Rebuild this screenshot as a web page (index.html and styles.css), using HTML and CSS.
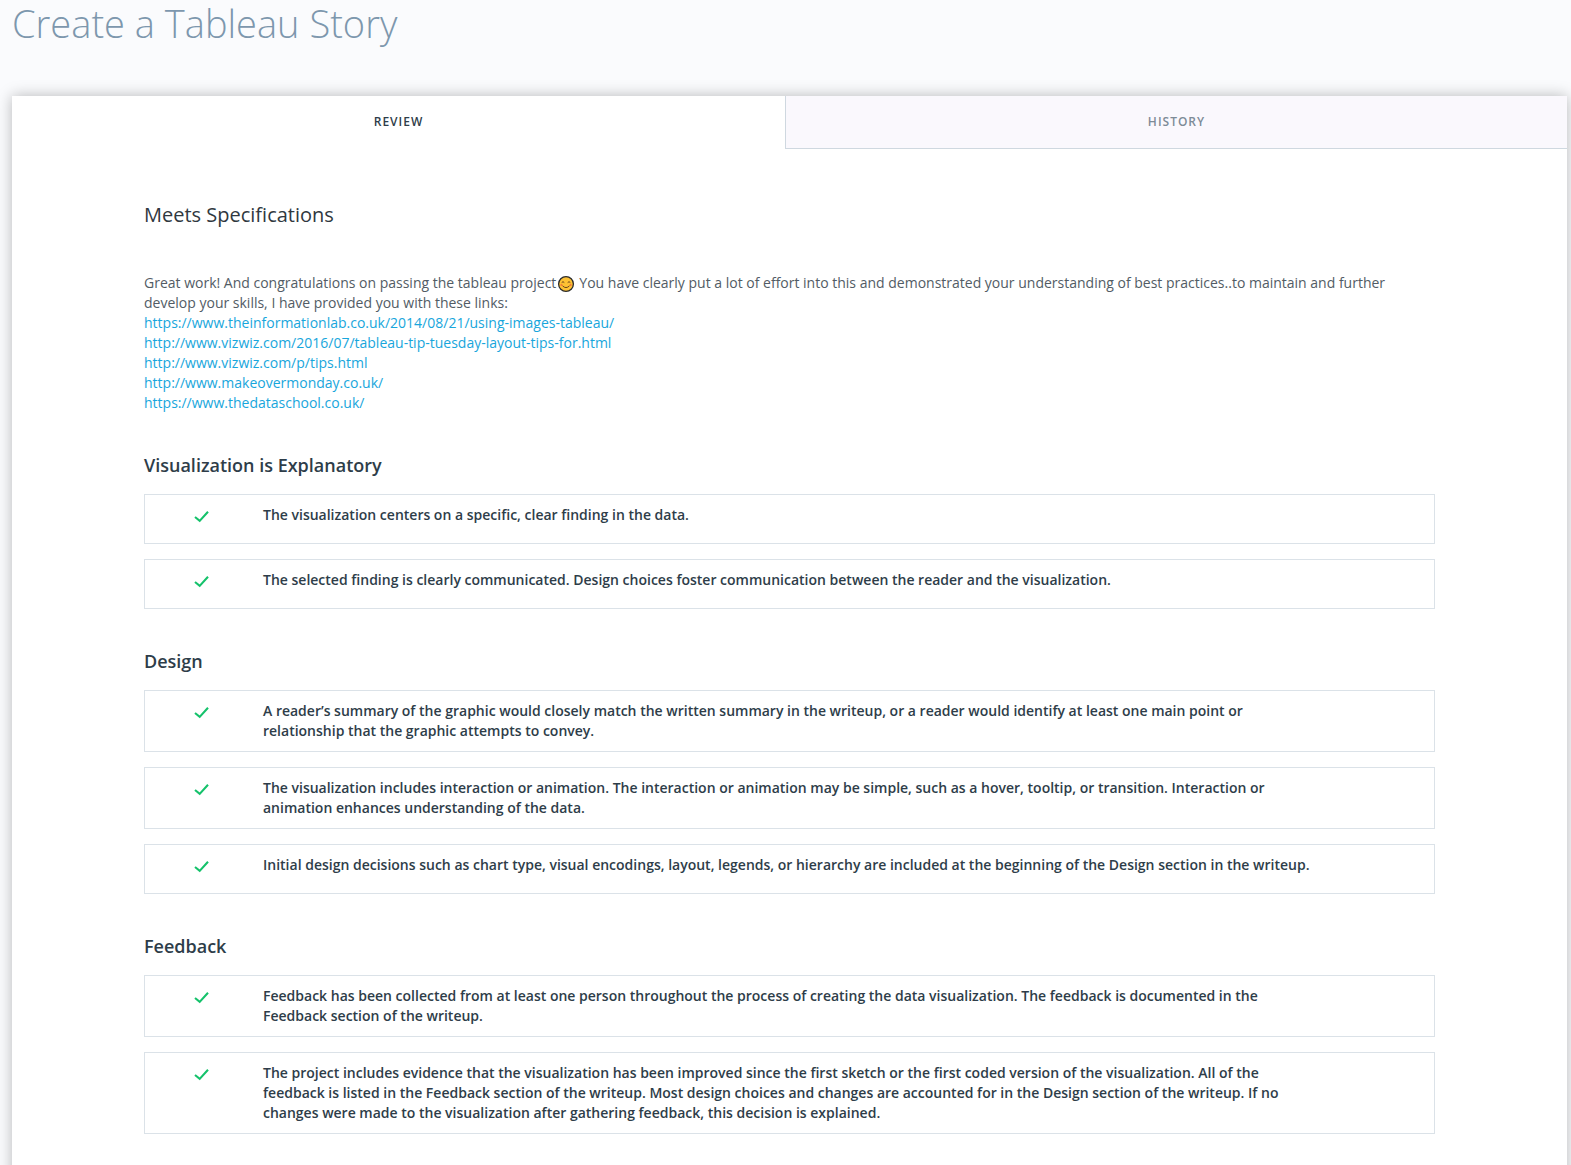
FILE: index.html
```html
<!DOCTYPE html>
<html lang="en">
<head>
<meta charset="utf-8">
<title>Create a Tableau Story</title>
<link rel="stylesheet" href="styles.css">
</head>
<body>
<svg class="sprite" width="0" height="0" aria-hidden="true">
  <symbol id="check" viewBox="0 0 15 12"><path d="M1 6 5.7 9.9 14 0.8" fill="none" stroke="#15c26b" stroke-width="2.1"/></symbol>
</svg>
<h1 class="page-title">Create a Tableau Story</h1>
<main class="card">
  <nav class="tabs">
    <a class="tab tab-active">REVIEW</a>
    <a class="tab">HISTORY</a>
  </nav>
  <div class="content">
    <h2 class="result">Meets Specifications</h2>
    <div class="summary">
      <p>Great work! And congratulations on passing the tableau project<svg class="emoji" viewBox="0 0 18 18"><circle cx="9" cy="9" r="7.4" fill="#fdc233" stroke="#2b2b2b" stroke-width="1.3"/><path d="M4.7 7.6q1.3-1.8 2.6 0M10.7 7.6q1.3-1.8 2.6 0M5.5 10.8q3.5 3.6 7 0" fill="none" stroke="#6a451c" stroke-width="1"/><path d="M3.5 10h1.8M12.7 10h1.8" stroke="#f2683c" stroke-width="1.5"/></svg> You have clearly put a lot of effort into this and demonstrated your understanding of best practices..to maintain and further develop your skills, I have provided you with these links:</p>
      <a>https://www.theinformationlab.co.uk/2014/08/21/using-images-tableau/</a>
      <a>http://www.vizwiz.com/2016/07/tableau-tip-tuesday-layout-tips-for.html</a>
      <a>http://www.vizwiz.com/p/tips.html</a>
      <a>http://www.makeovermonday.co.uk/</a>
      <a>https://www.thedataschool.co.uk/</a>
    </div>
    <section class="section">
      <h3>Visualization is Explanatory</h3>
      <div class="item"><svg class="check"><use href="#check"/></svg><p>The visualization centers on a specific, clear finding in the data.</p></div>
      <div class="item"><svg class="check"><use href="#check"/></svg><p>The selected finding is clearly communicated. Design choices foster communication between the reader and the visualization.</p></div>
    </section>
    <section class="section">
      <h3>Design</h3>
      <div class="item"><svg class="check"><use href="#check"/></svg><p>A reader’s summary of the graphic would closely match the written summary in the writeup, or a reader would identify at least one main point or relationship that the graphic attempts to convey.</p></div>
      <div class="item"><svg class="check"><use href="#check"/></svg><p>The visualization includes interaction or animation. The interaction or animation may be simple, such as a hover, tooltip, or transition. Interaction or animation enhances understanding of the data.</p></div>
      <div class="item"><svg class="check"><use href="#check"/></svg><p>Initial design decisions such as chart type, visual encodings, layout, legends, or hierarchy are included at the beginning of the Design section in the writeup.</p></div>
    </section>
    <section class="section">
      <h3>Feedback</h3>
      <div class="item"><svg class="check"><use href="#check"/></svg><p>Feedback has been collected from at least one person throughout the process of creating the data visualization. The feedback is documented in the Feedback section of the writeup.</p></div>
      <div class="item"><svg class="check"><use href="#check"/></svg><p>The project includes evidence that the visualization has been improved since the first sketch or the first coded version of the visualization. All of the feedback is listed in the Feedback section of the writeup. Most design choices and changes are accounted for in the Design section of the writeup. If no changes were made to the visualization after gathering feedback, this decision is explained.</p></div>
    </section>
  </div>
</main>
</body>
</html>
```
FILE: styles.css
```css
* { box-sizing: border-box; margin: 0; padding: 0; }
html { height: 100%; overflow: hidden; }
body {
  height: 1165px;
  overflow: hidden;
  background: #fafbfd;
  font: 14px/20px "Open Sans", sans-serif;
  color: #525c65;
}
.sprite { display: block; }
.page-title {
  height: 96px;
  padding-left: 12px;
  font-size: 38px;
  font-weight: 300;
  line-height: 46px;
  color: #7d97ad;
}
.card {
  height: 1100px;
  margin: 0 4px 0 12px;
  background: #fff;
  box-shadow: 0 0 14px rgba(0, 0, 0, 0.27);
}
.tabs { display: flex; height: 53px; }
.tab {
  flex: 0 0 782px;
  border-left: 1px solid #cfd8e0;
  border-bottom: 1px solid #cfd8e0;
  background: #faf8fd;
  font-size: 12px;
  font-weight: 600;
  line-height: 51px;
  letter-spacing: 1px;
  text-align: center;
  color: #7d8b97;
}
.tab-active {
  flex: 1;
  border: 0;
  background: #fff;
  color: #2e3d49;
}
.content { padding: 51px 132px 0; }
.result {
  font-size: 20px;
  font-weight: 400;
  line-height: 30px;
  color: #303840;
}
.summary { margin-top: 43px; }
.summary a { display: block; color: #18a6dc; }
.emoji {
  width: 18px;
  height: 18px;
  margin: -2px 0.4px -2px 1px;
  vertical-align: -3px;
}
.section { margin-top: 40px; }
.section h3 {
  margin-bottom: 17px;
  font-size: 18px;
  font-weight: 600;
  line-height: 24px;
  color: #2e3d49;
}
.item {
  display: flex;
  min-height: 50px;
  padding: 10px 120px 10px 49px;
  border: 1px solid #dbe2e8;
  font-weight: 600;
  color: #2e3d49;
}
.item + .item { margin-top: 15px; }
.check {
  flex: none;
  width: 15px;
  height: 12px;
  margin: 6px 54px 0 0;
}
```
